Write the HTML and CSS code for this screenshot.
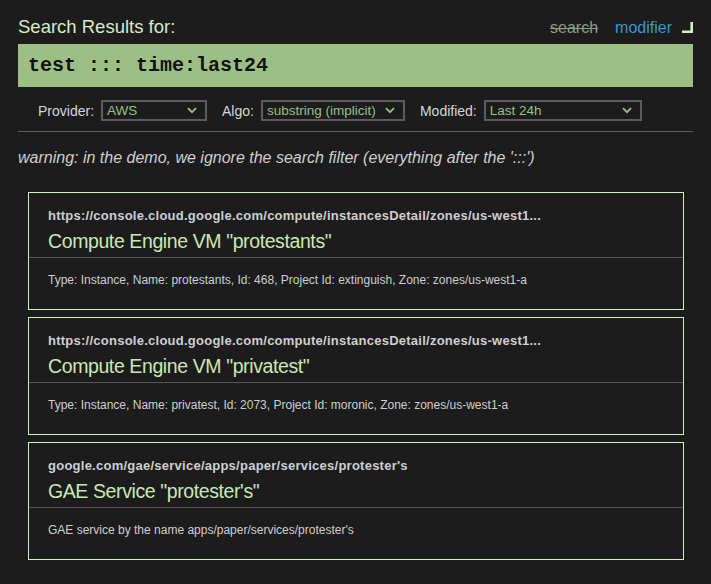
FILE: index.html
```html
<!DOCTYPE html>
<html>
<head>
<meta charset="utf-8">
<link rel="stylesheet" href="styles.css">
</head>
<body>
<div class="page">
  <div class="header">
    <div class="title">Search Results for:</div>
    <div class="modes">
      <span class="mode-search">search</span>
      <span class="mode-modifier">modifier</span>
      <svg class="corner" width="11" height="11" viewBox="0 0 11 11"><path d="M9.7 0 V9.7 H0" fill="none" stroke="#d4efbd" stroke-width="2.6"/></svg>
    </div>
  </div>
  <div class="query">test ::: time:last24</div>
  <div class="filters">
    <label class="flabel">Provider:</label>
    <div class="select sel-provider"><span>AWS</span><svg class="chev" width="10" height="7" viewBox="0 0 10 7"><path d="M1 1.2 L5 5.2 L9 1.2" fill="none" stroke="#9bbf85" stroke-width="1.8"/></svg></div>
    <label class="flabel">Algo:</label>
    <div class="select sel-algo"><span>substring (implicit)</span><svg class="chev" width="10" height="7" viewBox="0 0 10 7"><path d="M1 1.2 L5 5.2 L9 1.2" fill="none" stroke="#9bbf85" stroke-width="1.8"/></svg></div>
    <label class="flabel">Modified:</label>
    <div class="select sel-mod"><span>Last 24h</span><svg class="chev" width="10" height="7" viewBox="0 0 10 7"><path d="M1 1.2 L5 5.2 L9 1.2" fill="none" stroke="#9bbf85" stroke-width="1.8"/></svg></div>
  </div>
  <div class="rule"></div>
  <p class="warning">warning: in the demo, we ignore the search filter (everything after the ':::')</p>
  <div class="results">
    <div class="card">
      <div class="card-head">
        <div class="url">https://console.cloud.google.com/compute/instancesDetail/zones/us-west1...</div>
        <div class="card-title">Compute Engine VM "protestants"</div>
      </div>
      <div class="card-body">Type: Instance, Name: protestants, Id: 468, Project Id: extinguish, Zone: zones/us-west1-a</div>
    </div>
    <div class="card">
      <div class="card-head">
        <div class="url">https://console.cloud.google.com/compute/instancesDetail/zones/us-west1...</div>
        <div class="card-title">Compute Engine VM "privatest"</div>
      </div>
      <div class="card-body">Type: Instance, Name: privatest, Id: 2073, Project Id: moronic, Zone: zones/us-west1-a</div>
    </div>
    <div class="card">
      <div class="card-head">
        <div class="url">google.com/gae/service/apps/paper/services/protester's</div>
        <div class="card-title">GAE Service "protester's"</div>
      </div>
      <div class="card-body">GAE service by the name apps/paper/services/protester's</div>
    </div>
  </div>
</div>
</body>
</html>
```

FILE: styles.css
```css
html, body {
  margin: 0;
  padding: 0;
  background: #1c1c1c;
}
body {
  font-family: "Liberation Sans", Arial, Helvetica, sans-serif;
  color: #d0d0d0;
}
.page {
  padding: 16px 18px 20px 18px;
}
.header {
  display: flex;
  align-items: flex-end;
  justify-content: space-between;
  height: 22px;
}
.title {
  font-size: 18.5px;
  line-height: 22px;
  color: #d6ecc6;
}
.modes {
  display: flex;
  align-items: flex-end;
  font-size: 16px;
  line-height: 18px;
  padding-bottom: 1px;
}
.mode-search {
  color: #8c9e86;
  text-decoration: line-through;
  margin-right: 17px;
}
.mode-modifier {
  color: #3d95d3;
  margin-right: 10px;
}
.corner {
  display: block;
  margin-bottom: 4px;
}
.query {
  margin-top: 6px;
  height: 43px;
  line-height: 43px;
  background: #9bbf85;
  color: #111;
  font-family: "Liberation Mono", "Courier New", monospace;
  font-weight: bold;
  font-size: 20px;
  padding: 0 10px;
}
.filters {
  display: flex;
  align-items: center;
  margin-top: 13px;
  padding-left: 20px;
  height: 21px;
}
.flabel {
  font-size: 14px;
  color: #d6d6d6;
  margin-right: 7px;
}
.select {
  box-sizing: border-box;
  height: 21px;
  border: 2px solid #5c5c5c;
  display: flex;
  align-items: center;
  justify-content: space-between;
  padding: 0 8px 0 4px;
  font-size: 13.5px;
  color: #9bbf85;
  margin-right: 15px;
}
.chev {
  display: block;
}
.sel-provider { width: 106px; }
.sel-algo { width: 144px; }
.sel-mod { width: 158px; }
.rule {
  margin-top: 10px;
  height: 1px;
  background: #5e5e5e;
}
.warning {
  margin: 17px 0 0 0;
  font-style: italic;
  font-size: 16px;
  line-height: 18px;
  color: #cfcfcf;
}
.results {
  margin-top: 25px;
  display: flex;
  flex-direction: column;
  gap: 7px;
  margin-left: 10px;
  margin-right: 9px;
}
.card {
  border: 1px solid #d2efb9;
}
.card-head {
  padding: 15px 19px 4px 19px;
  border-bottom: 1px solid #575757;
}
.url {
  font-size: 13px;
  line-height: 15px;
  font-weight: bold;
  letter-spacing: 0.25px;
  color: #cfcfcf;
}
.card-title {
  margin-top: 6px;
  font-size: 19.5px;
  letter-spacing: -0.4px;
  line-height: 24px;
  color: #cbe8b4;
}
.card-body {
  padding: 15px 19px 21px 19px;
  font-size: 12px;
  line-height: 15px;
  color: #cfcfcf;
}
```
